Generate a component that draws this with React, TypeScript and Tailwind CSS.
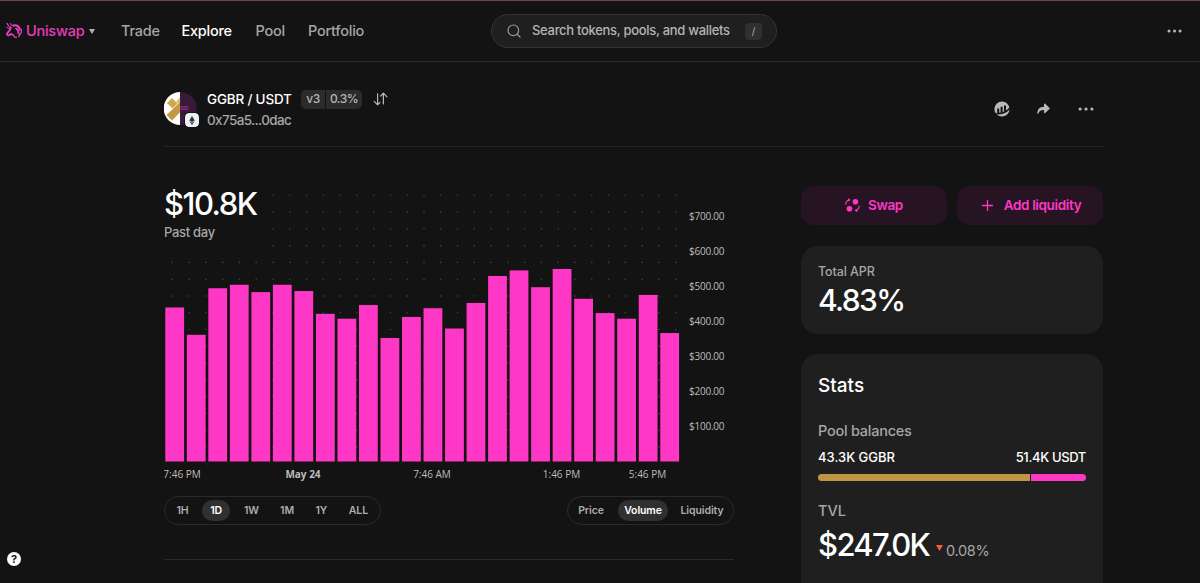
import { clsx } from 'clsx';
import { Plus, Search } from 'lucide-react';

const NAV_LINKS = [
  { label: 'Trade', className: 'w-[60.5px]' },
  { label: 'Explore', className: 'w-[74px]', active: true },
  { label: 'Pool', className: 'w-[52.5px]' },
  { label: 'Portfolio', className: 'w-[60px]' },
];

const RANGES = [
  { label: '1H', className: 'w-[27px]' },
  { label: '1D', className: 'w-[28px]' },
  { label: '1W', className: 'w-[30px]' },
  { label: '1M', className: 'w-[29px]' },
  { label: '1Y', className: 'w-[27px]' },
  { label: 'ALL', className: 'w-[35px]' },
];

const CHART_TYPES = [
  { label: 'Price', className: 'w-[42px]' },
  { label: 'Volume', className: 'w-[50px]' },
  { label: 'Liquidity', className: 'w-[56px]' },
];

// hourly volume in USD
const VOLUME = [
  440, 362, 495, 505, 484, 505, 487, 422, 408, 447, 353, 413, 438, 380, 453, 530, 546, 498, 550, 465,
  424, 408, 476, 367,
];

const Y_TICKS = [700, 600, 500, 400, 300, 200, 100];

const X_TICKS = [
  { label: '7:46 PM', x: 18 },
  { label: 'May 24', x: 139, bold: true },
  { label: '7:46 AM', x: 268 },
  { label: '1:46 PM', x: 397.5 },
  { label: '5:46 PM', x: 483.5 },
];

const BASELINE = 274.5;
const PX_PER_USD = 0.35;
const BAR_STEP = 21.52;
const DOT_STEP = 16.78;

function UniswapLogo() {
  return (
    <svg width="18" height="18" viewBox="0 0 18 18" fill="none" stroke="#f03fc6" strokeLinecap="round">
      <path d="M2 1.2c.8 2.4 2 3.8 4.2 4.4M2 5.4c1 .8 2 1.1 3.2 1" strokeWidth="1.1" />
      <path d="M5.4 1.6c.5 1.3 1.5 2 3 2.1" strokeWidth="1.1" />
      <path d="M5.6 6.4C4.9 8.8 2.6 9.9 1.8 12.4c.6.9 1.5 1.2 2.5.8l2-1.4" strokeWidth="1.7" />
      <path d="M8.4 3.4c3-.6 5.6 1.200 6.500 4.200" strokeWidth="2" />
      <path d="M11 6.400c1.900 1 2.700 2.700 2.300 4.600" strokeWidth="1.700" />
      <path d="M16.300 7.500c.4 2 0 3.500-.8 4.600M14.500 12l-.6 2.600" strokeWidth="1.300" />
      <path d="M6.300 12.500c1.500-.1 2.500.5 2.700 1.500.2 1.200 1.200 1.800 2.400 1.200" strokeWidth="1.300" />
    </svg>
  );
}

function MoreIcon({ small }: { small?: boolean }) {
  return (
    <svg width={small ? 15 : 16} height="4" viewBox="0 0 16 4" fill="#b8b8b8">
      <circle cx="2.1" cy="2" r="1.6" />
      <circle cx="8" cy="2" r="1.6" />
      <circle cx="13.9" cy="2" r="1.6" />
    </svg>
  );
}

function EtherscanIcon() {
  return (
    <svg width="16" height="16" viewBox="0 0 16 16">
      <circle cx="8" cy="8" r="7.6" fill="#b8b8b8" />
      <path d="M4.2 7.4v4.6M7.6 5.8v5.6M11 4.4v6" stroke="#131313" strokeWidth="2" />
      <path d="M2.2 12.7C7.8 12.8 12.8 11 16 7" fill="none" stroke="#131313" strokeWidth="1.6" />
    </svg>
  );
}

function ShareIcon() {
  return (
    <svg width="13" height="12" viewBox="0 0 13 12" fill="#b8b8b8">
      <path d="M7 1.2c0-.7.7-1 1.2-.5l4.2 4c.4.4.4.8 0 1.2l-4.2 4c-.5.5-1.2.2-1.2-.5V7C4 6.9 2.4 7.7 1.5 10.5c-.2.6-1.1.5-1.1-.1C.5 6.2 2.5 3.8 7 3.7z" />
    </svg>
  );
}

function ReverseIcon() {
  return (
    <svg width="15" height="14" viewBox="0 0 15 14" fill="none" stroke="#b8b8b8" strokeWidth="1.2">
      <path
        d="M4.6 1.8v11M1.2 9.4l3.4 3.4 2.4-2.4M10.4 12V1.2M7.7 4l2.7-2.8L14 4.8"
        strokeLinecap="round"
        strokeLinejoin="round"
      />
    </svg>
  );
}

function SwapIcon() {
  return (
    <svg width="15" height="15" viewBox="0 0 15 15" fill="none" stroke="#ff37c7" strokeWidth="1.1">
      <circle cx="10.4" cy="3.7" r="2.8" fill="#ff37c7" stroke="none" />
      <circle cx="4.4" cy="10.8" r="2.8" fill="#ff37c7" stroke="none" />
      <path d="M.7 6.8c0-2.8 1-4.2 3.6-5M3.1.8l1.5.9-.9 1.6" />
      <path d="M14.2 7.4c0 2.8-1 4.5-3.6 5.2M11.8 11.1l-1.3 1.5 1.7 1" />
    </svg>
  );
}

function TokenPairLogo() {
  return (
    <div className="relative h-[35px] w-[35px]">
      <svg width="34" height="34" viewBox="0 0 34 34">
        <defs>
          <clipPath id="leftHalf">
            <path d="M16.2 0A16.5 16.5 0 0 0 16.2 33z" />
          </clipPath>
        </defs>
        <path d="M16.2 0A16.5 16.5 0 0 0 16.2 33z" fill="#fff" />
        <g clipPath="url(#leftHalf)">
          <path d="M3 11l5-5 5.500 5.500-5 5z" fill="#d2a84f" />
          <path d="M17 4.5l-5 5 5 5z" fill="#e0bd68" />
          <path d="M16 10l5 5L8 28.500 2.500 23z" fill="#c39a43" />
        </g>
        <path d="M16.2 0a16.5 16.5 0 0 1 0 33z" fill="#361a37" />
      </svg>
      <span className="absolute left-[16px] top-[12px] font-['Liberation_Sans',sans-serif] text-[6px] leading-[8px] text-[#d637b4]">
        SD
      </span>
      <div className="absolute left-[21px] top-[21px] flex h-[14px] w-[14px] items-center justify-center rounded-[4px] bg-[#edf0f8] outline outline-[#131313]">
        <svg width="6" height="9" viewBox="0 0 6 9" fill="#333">
          <path d="M3 0l2.7 4.4L3 6 .3 4.4z" />
          <path d="M.3 5.2L3 6.8l2.7-1.6L3 9z" />
        </svg>
      </div>
    </div>
  );
}

function Header() {
  return (
    <header className="flex h-[62px] items-center border-t border-b border-t-[#7b3b54] border-b-[#2a2a2a] pl-[5px] pr-[18px]">
      <div className="flex w-[116px] items-center">
        <UniswapLogo />
        <span className="ml-[3px] text-[14.5px] font-medium tracking-[-0.25px] text-[#e83cbe]">Uniswap</span>
        <svg className="ml-[5px]" width="6" height="5" viewBox="0 0 6 5" fill="#b0b0b0">
          <path d="M0 0h6L3 5z" />
        </svg>
      </div>
      <nav className="flex w-[370px] text-[14.5px] font-medium tracking-[-0.25px]">
        {NAV_LINKS.map((link) => (
          <a key={link.label} className={clsx('whitespace-nowrap', link.className, link.active ? 'text-white' : 'text-[#a6a6a6]')}>
            {link.label}
          </a>
        ))}
      </nav>
      <div className="flex h-[34px] w-[286px] items-center rounded-full border border-[#343434] bg-[#1f1f1f] pl-[14px] pr-[14px]">
        <Search className="h-4 w-4 text-[#999]" strokeWidth={1.8} />
        <span className="ml-[10px] whitespace-nowrap text-[13px] font-medium tracking-[-0.3px] text-[#b5b5b5]">
          Search tokens, pools, and wallets
        </span>
        <kbd className="ml-auto flex h-[17px] w-[17px] items-center justify-center rounded-[4px] bg-[#303030] font-['Inter',sans-serif] text-[10px] text-[#aaa]">
          /
        </kbd>
      </div>
      <div className="ml-auto">
        <MoreIcon small />
      </div>
    </header>
  );
}

function PoolHeader() {
  return (
    <div className="flex h-[85px] border-b border-[#262626] pt-[30px]">
      <TokenPairLogo />
      <div className="ml-[8px]">
        <div className="-mt-[2px] flex h-[18px] items-center">
          <h1 className="w-[94px] whitespace-nowrap text-[13.5px] font-medium tracking-[-0.2px] text-white">GGBR / USDT</h1>
          <div className="flex gap-px text-[12px] font-medium tracking-[-0.5px] text-[#b5b5b5]">
            <span className="flex h-[19px] w-[24px] items-center justify-center rounded-l-[5px] bg-[#2b2b2b]">v3</span>
            <span className="flex h-[19px] w-[36px] items-center justify-center rounded-r-[5px] bg-[#2b2b2b]">0.3%</span>
          </div>
          <div className="ml-[11px]">
            <ReverseIcon />
          </div>
        </div>
        <p className="mt-[2px] text-[13.5px] font-medium leading-[20px] tracking-[-0.62px] text-[#a6a6a6]">0x75a5...0dac</p>
      </div>
      <div className="ml-auto mr-[9px] flex h-[34px] items-center">
        <EtherscanIcon />
        <div className="ml-[27px] mr-[28px]">
          <ShareIcon />
        </div>
        <MoreIcon />
      </div>
    </div>
  );
}

function VolumeChart() {
  const dots = [];
  for (let row = 0; row < 16; row++) {
    for (let col = 0; col <= 30; col++) {
      // leave room for the headline value
      if (row < 4 && col < 6) continue;
      dots.push(<circle key={`${row}-${col}`} cx={8.3 + col * DOT_STEP} cy={8.3 + row * DOT_STEP} r="0.8" />);
    }
  }

  return (
    <div className="relative h-[296px] w-[570px]">
      <svg className="block" width="570" height="296" viewBox="0 0 570 296">
        <g fill="#424242">{dots}</g>
        {VOLUME.map((value, i) => (
          <rect
            key={i}
            x={1.3 + i * BAR_STEP}
            y={BASELINE - value * PX_PER_USD}
            width="18.8"
            height={value * PX_PER_USD}
            fill="#ff37c7"
          />
        ))}
        <g fill="#bdbdbd" className="font-['Open_Sans',sans-serif] text-[10px]">
          {Y_TICKS.map((tick) => (
            <text key={tick} x="525" y={278 - tick * PX_PER_USD} textLength="35.5">{`$${tick}.00`}</text>
          ))}
          {X_TICKS.map((tick) => (
            <text key={tick.label} x={tick.x} y="291" textAnchor="middle" fontWeight={tick.bold ? 700 : 400}>
              {tick.label}
            </text>
          ))}
        </g>
      </svg>
      <div className="absolute left-0 top-0">
        <p className="text-[31px] font-medium leading-[34px] tracking-[-1.5px] text-white">$10.8K</p>
        <p className="mt-[2px] text-[13px] font-medium leading-[18px] tracking-[-0.3px] text-[#a6a6a6]">Past day</p>
      </div>
    </div>
  );
}

interface PillTabsProps {
  tabs: { label: string; className: string }[];
  active: string;
  className: string;
}

function PillTabs({ tabs, active, className }: PillTabsProps) {
  return (
    <div
      className={clsx(
        'flex h-[29px] items-center justify-between rounded-full border border-[#2a2a2a] text-[10.5px] tracking-[-0.1px]',
        className,
      )}
    >
      {tabs.map((tab) => (
        <button
          key={tab.label}
          className={clsx(
            'h-[21px] rounded-full font-semibold',
            tab.className,
            tab.label === active ? 'bg-[#303030] text-white' : 'text-[#adadad]',
          )}
        >
          {tab.label}
        </button>
      ))}
    </div>
  );
}

function Sidebar() {
  return (
    <aside className="flex w-[302px] flex-col">
      <div className="flex gap-[10px] text-[13.5px] font-semibold tracking-[-0.35px] text-[#ff37c7]">
        <button className="flex h-[39px] w-[146px] items-center justify-center gap-[8px] rounded-[13px] bg-[#271422]">
          <SwapIcon />
          Swap
        </button>
        <button className="flex h-[39px] w-[146px] items-center justify-center gap-[8px] rounded-[13px] bg-[#271422]">
          <Plus className="h-[17px] w-[17px]" strokeWidth={1.8} />
          Add liquidity
        </button>
      </div>
      <section className="mt-[21px] h-[88px] rounded-[17px] bg-[#1f1f1f] px-[17px] pt-[17px]">
        <p className="text-[12.5px] font-medium leading-[17px] tracking-[-0.1px] text-[#a6a6a6]">Total APR</p>
        <p className="mt-[1px] text-[30px] font-medium leading-[38px] tracking-[-1.6px] text-white">4.83%</p>
      </section>
      <section className="mt-[20px] h-[229px] rounded-t-[17px] bg-[#1f1f1f] px-[17px] pt-[19px]">
        <h2 className="text-[19px] font-medium leading-[26px] text-white">Stats</h2>
        <p className="mt-[22px] text-[14.5px] font-medium leading-[20px] tracking-[-0.25px] text-[#a6a6a6]">Pool balances</p>
        <div className="mt-[6px] flex justify-between text-[13px] font-medium leading-[20px] text-white">
          <span>43.3K GGBR</span>
          <span className="tracking-[-0.35px]">51.4K USDT</span>
        </div>
        <div className="mt-[7px] flex h-[7px] gap-px">
          <div className="w-[212px] rounded-l-full bg-[#c19544]" />
          <div className="flex-1 rounded-r-full bg-[#ff37c7]" />
        </div>
        <p className="mt-[20px] text-[14.5px] font-medium leading-[20px] text-[#a6a6a6]">TVL</p>
        <div className="mt-[5px] flex items-baseline">
          <span className="w-[118px] text-[31px] font-medium leading-[38px] tracking-[-1.65px] text-white">$247.0K</span>
          <svg className="-translate-y-[5px]" width="7" height="6" viewBox="0 0 7 6" fill="#ff593c">
            <path d="M0 0h7L3.5 6z" />
          </svg>
          <span className="ml-[3px] text-[14.5px] tracking-[-0.3px] text-[#a6a6a6]">0.08%</span>
        </div>
      </section>
    </aside>
  );
}

export default function App() {
  return (
    <div className="relative h-[583px] w-[1200px] overflow-hidden bg-[#131313] font-['Inter',sans-serif]">
      <Header />
      <main className="ml-[164px] w-[939px]">
        <PoolHeader />
        <div className="flex justify-between">
          <div className="w-[570px] pt-[40px]">
            <VolumeChart />
            <div className="mt-[13px] flex justify-between">
              <PillTabs tabs={RANGES} active="1D" className="w-[217px] px-[4px]" />
              <PillTabs tabs={CHART_TYPES} active="Volume" className="w-[167px] pl-[2px] pr-[3px]" />
            </div>
            <div className="mt-[34px] border-t border-[#2a2a2a]" />
          </div>
          <div className="pt-[39px]">
            <Sidebar />
          </div>
        </div>
      </main>
      <button className="absolute bottom-[17px] left-[7px] flex h-[14px] w-[14px] items-center justify-center rounded-full bg-white text-[11px] font-bold text-[#131313]">
        ?
      </button>
    </div>
  );
}
